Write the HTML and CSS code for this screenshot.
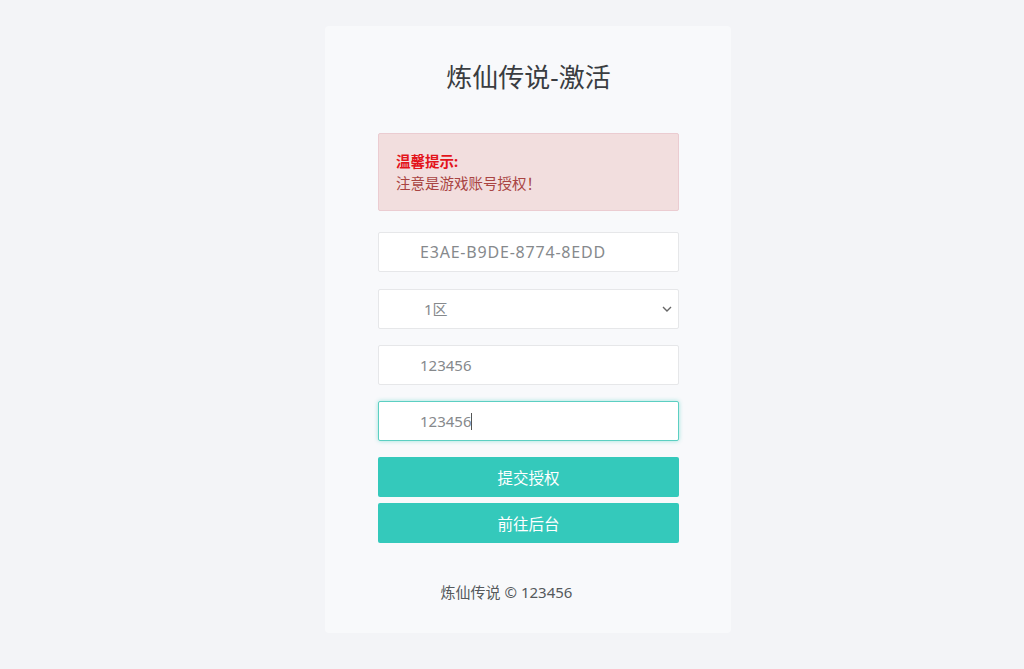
FILE: index.html
```html
<!DOCTYPE html>
<html lang="zh">
<head>
<meta charset="utf-8">
<title>炼仙传说-激活</title>
<link rel="stylesheet" href="styles.css">
</head>
<body>
<div class="page">
  <div class="card">
    <h1 class="title">炼仙传说-激活</h1>
    <div class="alert">
      <div class="alert-head">温馨提示:</div>
      <div class="alert-body">注意是游戏账号授权！</div>
    </div>
    <form class="form">
      <input class="field code" type="text" value="E3AE-B9DE-8774-8EDD">
      <div class="select-wrap">
        <select class="field select"><option>1区</option></select>
        <svg class="chev" width="10" height="6" viewBox="0 0 10 6"><path d="M1 1l4 4 4-4" fill="none" stroke="#666" stroke-width="1.4"/></svg>
      </div>
      <input class="field" type="text" value="123456">
      <div class="field focus"><span>123456</span><i class="caret"></i></div>
      <button type="button" class="btn">提交授权</button>
      <button type="button" class="btn btn-gap">前往后台</button>
    </form>
    <p class="footer">炼仙传说 © 123456</p>
  </div>
</div>
</body>
</html>
```
FILE: styles.css
```css
html, body { margin: 0; padding: 0; }
body {
  background: #f3f4f7;
  font-family: "Noto Sans", "Noto Sans CJK SC", sans-serif;
  height: 669px;
  overflow: hidden;
}
.page {
  display: flex;
  justify-content: center;
  padding: 26px 0 0 32px;
}
.card {
  width: 406px;
  box-sizing: border-box;
  background: #f8f9fb;
  border-radius: 4px;
  padding: 33px 52px 30px 53px;
}
.title {
  margin: 0;
  text-align: center;
  font-size: 26px;
  font-weight: 400;
  line-height: 36px;
  color: #3a3d41;
}
.alert {
  margin-top: 38px;
  background: #f2dede;
  border: 1px solid #ebccd1;
  border-radius: 2px;
  padding: 16px 16px 16px 17px;
  font-size: 14.5px;
  line-height: 22px;
  color: #a94442;
}
.alert-head { color: #e3141b; font-weight: 700; }
.form {
  display: flex;
  flex-direction: column;
  margin-top: 21px;
}
.field {
  box-sizing: border-box;
  height: 40px;
  width: 100%;
  border: 1px solid #e6e7e9;
  background: #fff;
  border-radius: 2px;
  padding: 0 10px 0 41px;
  font-family: inherit;
  font-size: 15px;
  color: #86898c;
  outline: none;
  margin: 0 0 16px;
}
.form > .field:first-child { margin-bottom: 17px; }
.code { font-size: 16px; letter-spacing: 0.8px; }
.select-wrap { position: relative; }
.select {
  appearance: none;
  -webkit-appearance: none;
  padding-left: 45px;
}
.chev { position: absolute; right: 7px; top: 17px; }
.focus {
  display: flex;
  align-items: center;
  border-color: #5ccfc2;
  box-shadow: 0 0 4px rgba(52, 201, 187, 0.45);
}
.caret {
  display: inline-block;
  width: 1px;
  height: 17px;
  background: #555;
}
.btn {
  height: 40px;
  border: none;
  border-radius: 2px;
  background: #34c9bb;
  color: #fff;
  font-family: inherit;
  font-size: 15.5px;
  cursor: pointer;
}
.btn-gap { margin-top: 6px; }
.footer {
  margin: 38px 0 0;
  padding-right: 44px;
  text-align: center;
  font-size: 15px;
  line-height: 22px;
  color: #55595c;
}
```
